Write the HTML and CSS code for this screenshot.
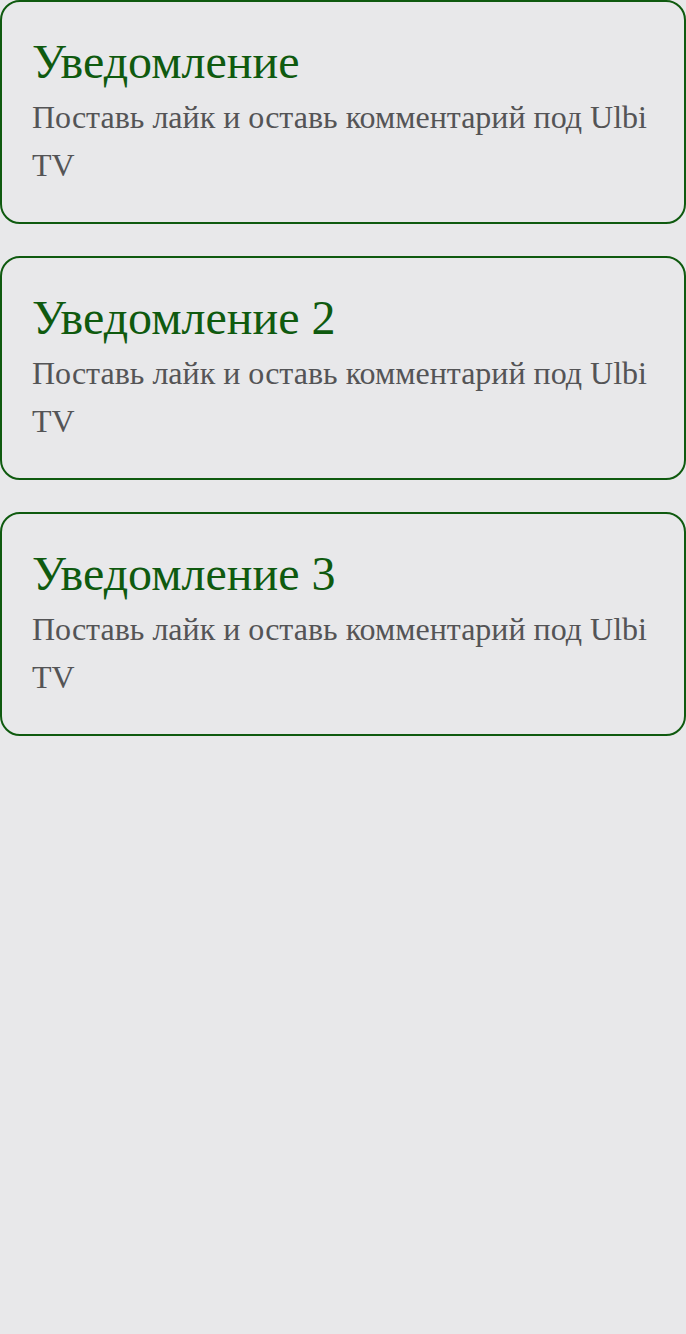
FILE: index.html
```
<!DOCTYPE html>
<html lang="ru">
<head>
<meta charset="utf-8">
<link rel="stylesheet" href="styles.css">
</head>
<body>
<div class="list">
  <div class="card">
    <div class="title">Уведомление</div>
    <div class="text">Поставь лайк и оставь комментарий под Ulbi TV</div>
  </div>
  <div class="card">
    <div class="title">Уведомление 2</div>
    <div class="text">Поставь лайк и оставь комментарий под Ulbi TV</div>
  </div>
  <div class="card">
    <div class="title">Уведомление 3</div>
    <div class="text">Поставь лайк и оставь комментарий под Ulbi TV</div>
  </div>
</div>
</body>
</html>
```
FILE: styles.css
```
html, body {
  margin: 0;
  padding: 0;
  background: #e8e8ea;
  font-family: "Liberation Serif", "Times New Roman", serif;
}
.list {
  display: flex;
  flex-direction: column;
  gap: 32px;
}
.card {
  border: 2px solid #0f5a0f;
  border-radius: 20px;
  padding: 30px 30px 33px;
}
.title {
  font-size: 48px;
  color: #0f5a0f;
  line-height: 59px;
  margin-bottom: 2px;
}
.text {
  font-size: 32px;
  line-height: 48px;
  color: #545456;
}
```
